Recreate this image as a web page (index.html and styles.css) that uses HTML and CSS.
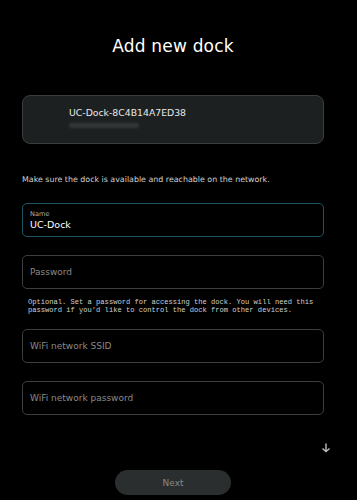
FILE: index.html
```html
<!DOCTYPE html>
<html>
<head>
<meta charset="utf-8">
<link rel="stylesheet" href="styles.css">
</head>
<body>
<main class="page">
  <h1 class="title">Add new dock</h1>
  <div class="dock-card">
    <div class="dock-name">UC-Dock-8C4B14A7ED38</div>
    <div class="dock-sub">&nbsp;</div>
  </div>
  <p class="info">Make sure the dock is available and reachable on the network.</p>
  <div class="field field-active">
    <span class="field-label">Name</span>
    <span class="field-value">UC-Dock</span>
  </div>
  <div class="field field-pw">
    <span class="placeholder">Password</span>
  </div>
  <p class="help">Optional. Set a password for accessing the dock. You will need this password if you'd like to control the dock from other devices.</p>
  <div class="field field-ssid">
    <span class="placeholder">WiFi network SSID</span>
  </div>
  <div class="field field-wpw">
    <span class="placeholder">WiFi network password</span>
  </div>
  <div class="arrow-row">
    <svg class="arrow" width="10" height="10" viewBox="0 0 10 10"><path d="M5 0.5V8.5M1.5 5.5L5 8.5L8.5 5.5" fill="none" stroke="#bdbdbd" stroke-width="1.4"/></svg>
  </div>
  <div class="btn-row">
    <button class="next-btn">Next</button>
  </div>
</main>
</body>
</html>
```
FILE: styles.css
```css
html, body {
  margin: 0;
  padding: 0;
  background: #000;
  height: 100%;
  overflow: hidden;
}
body {
  font-family: "DejaVu Sans", "Noto Sans", sans-serif;
  color: #fff;
}
.page {
  width: 302px;
  margin-left: 22px;
  display: flex;
  flex-direction: column;
}
.title {
  margin: 35px 0 0 0;
  font-size: 17px;
  font-weight: 400;
  text-align: center;
  line-height: 22px;
  letter-spacing: 0.2px;
}
.dock-card {
  margin-top: 38px;
  height: 49px;
  box-sizing: border-box;
  background: #1d2020;
  border: 1px solid #3a3d3d;
  border-radius: 8px;
  padding: 10px 0 0 46px;
}
.dock-name {
  font-size: 9.3px;
  line-height: 14px;
  color: #e8e8e8;
}
.dock-sub {
  margin-top: 3px;
  width: 70px;
  height: 5px;
  border-radius: 3px;
  background: #343737;
  filter: blur(1.2px);
  font-size: 1px;
}
.info {
  margin: 30px 0 0 0;
  font-size: 7.9px;
  line-height: 12px;
  color: #d0d0d0;
}
.field {
  box-sizing: border-box;
  height: 34px;
  border: 1px solid #3c3f3f;
  border-radius: 5px;
  padding: 0 7px;
  display: flex;
  flex-direction: column;
  justify-content: center;
}
.field-active {
  margin-top: 17px;
  border-color: #1e5560;
}
.field-label {
  font-size: 6.6px;
  line-height: 8px;
  color: #b0b0b0;
}
.field-value {
  font-size: 9.5px;
  line-height: 13px;
  color: #fff;
}
.placeholder {
  font-size: 9px;
  line-height: 12px;
  color: #8a8a8a;
}
.field-pw {
  margin-top: 18px;
}
.help {
  margin: 9px 0 0 6px;
  font-family: "Liberation Mono", "DejaVu Sans Mono", monospace;
  font-size: 7.1px;
  line-height: 8px;
  color: #d0d0d0;
}
.field-ssid {
  margin-top: 15px;
}
.field-wpw {
  margin-top: 18px;
}
.arrow-row {
  display: flex;
  justify-content: flex-end;
  margin-top: 28px;
  margin-right: -7px;
  height: 10px;
}
.btn-row {
  display: flex;
  justify-content: center;
  margin-top: 17px;
}
.next-btn {
  width: 116px;
  height: 25px;
  border: none;
  border-radius: 13px;
  background: #2a2e2e;
  color: #868a8a;
  font-family: "DejaVu Sans", sans-serif;
  font-size: 9px;
}
```
